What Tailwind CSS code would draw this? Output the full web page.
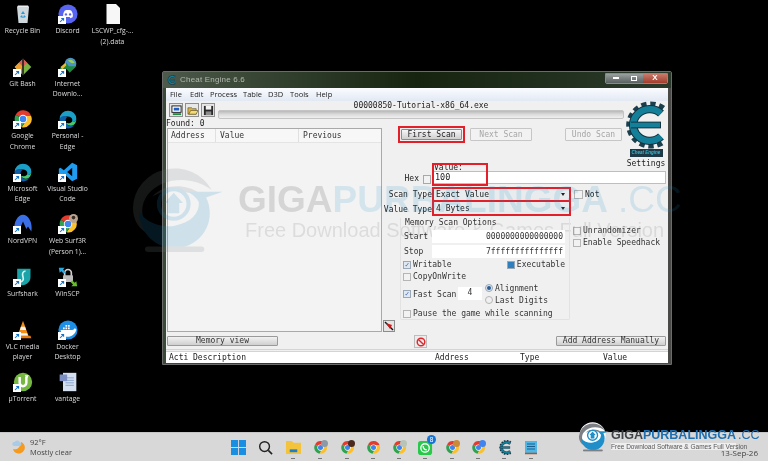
<!DOCTYPE html>
<html lang="en">
<head>
  <meta charset="UTF-8" />
  <title>Cheat Engine desktop</title>
  <script src="https://cdn.jsdelivr.net/npm/@tailwindcss/browser@4"></script>
</head>
<body class="bg-black overflow-hidden">

  <!-- shared icons -->
  <svg class="hidden" xmlns="http://www.w3.org/2000/svg">
    <symbol id="chrome" viewBox="0 0 24 24">
      <path d="M12 12 3.3 7A10 10 0 0 1 21.6 8H12z" fill="#e33b2e"/>
      <path d="M3.3 7A10 10 0 0 0 10.5 21.9L15 13.5 12 12z" fill="#2fa14f"/>
      <path d="M21.6 8A10 10 0 0 1 10.5 21.9L15.5 14 12 8z" fill="#fbc02d"/>
      <circle cx="12" cy="12" r="5" fill="#fff"/>
      <circle cx="12" cy="12" r="4" fill="#3f84f0"/>
    </symbol>
    <symbol id="edge" viewBox="0 0 24 24">
      <path d="M2 12A10 10 0 0 1 22 12C22 15 19 16 16.500 15.500 18 14 17.500 9 12 9 6 9 3 11 2 12z" fill="#1b9fc7"/>
      <path d="M2 12C3 8 9 7.500 11 10 8 12 8.500 18 13 20 15 21 18 20.500 20 19A10 10 0 0 1 2 12z" fill="#0f5fa8"/>
      <path d="M16.500 15.500C18.500 16 21 15.500 22 13 21.500 16 20.500 18 19 19 16 21 11 20 9.500 16.500 12 17.500 15 17 16.500 15.500z" fill="#45c96a"/>
    </symbol>
    <symbol id="short" viewBox="0 0 10 10">
      <rect width="10" height="10" fill="#fff"/>
      <path d="M2.500 7.500 6.500 3.500M4 3h3v3" fill="none" stroke="#1573c9" stroke-width="1.300"/>
    </symbol>
    <symbol id="cegear" viewBox="0 0 48 48">
      <path d="M44 7A21 21 0 1 0 44 41" fill="none" stroke="#1c3f4e" stroke-width="7" stroke-dasharray="5 3.500"/>
      <path d="M42 12A16.500 16.500 0 1 0 42 36" fill="none" stroke="#14323f" stroke-width="8.500"/>
      <path d="M42 12A16.500 16.500 0 1 0 42 36" fill="none" stroke="#137f98" stroke-width="6.500"/>
      <path d="M12 24H42" fill="none" stroke="#14323f" stroke-width="7"/>
      <path d="M11 24H41" fill="none" stroke="#137f98" stroke-width="5"/>
    </symbol>
    <symbol id="gplogo" viewBox="0 0 100 95">
      <path d="M3 46A45 43 0 0 1 88 27C68 12 36 12 19 32 8 46 13 66 27 76 12 74 3 62 3 46z" fill="#7c8085"/>
      <path d="M24 34C36 20 60 20 74 30L62 30C50 25 36 27 24 34z" fill="#7c8085"/>
      <path d="M62 29H100L82 35A38 38 0 1 1 10 50A33 24 0 0 0 74 40 28 28 0 0 0 62 29z" fill="#1f8ec9"/>
      <circle cx="47" cy="42" r="16" fill="none" stroke="#1f8ec9" stroke-width="4.500"/>
      <path d="M47 30 37 41H41V52H53V41H57z" fill="#1f8ec9"/>
      <rect x="16" y="88" width="64" height="6" rx="3" fill="#7c8085"/>
    </symbol>
  </svg>

  <div class="relative w-[768px] h-[461px] overflow-hidden bg-black blur-[0.35px]">

    <!-- desktop icons -->
    <div class="absolute left-0 top-0 grid grid-flow-col grid-rows-[repeat(8,52.6px)] grid-cols-[45px_45px_45px] text-[6.8px] leading-[10.6px] text-[#dcdcdc] text-center font-['Open_Sans',sans-serif]">
      <div class="flex flex-col items-center pt-[4px]">
        <svg class="w-[20px] h-[20px]" viewBox="0 0 20 20"><path d="M4 3h12l-1.500 16h-9z" fill="#cfd8dc"/><path d="M5 1.500h10L16 3H4z" fill="#eceff1"/><path d="M10 7l2 3h-4zM7 13l2-2 1 3zM13 13l-2-2-1 3z" fill="#2a9bd8"/></svg>
        <span class="mt-[2px]">Recycle Bin</span>
      </div>
      <div class="flex flex-col items-center pt-[4px]">
        <div class="relative w-[20px] h-[20px]">
          <svg class="w-[20px] h-[20px]" viewBox="0 0 24 24"><path d="M12 2 2 12l10 10 10-10z" fill="#7cb342"/><path d="M12 2 7 7l5 5 5-5z" fill="#e05a5a"/><path d="M2 12l5-5 5 5-5 5z" fill="#f0a030"/><path d="M12 2v20" stroke="#222" stroke-width="2"/></svg>
          <svg class="absolute left-0 bottom-0 w-[8px] h-[8px]"><use href="#short"/></svg>
        </div>
        <span class="mt-[2px]">Git Bash</span>
      </div>
      <div class="flex flex-col items-center pt-[4px]">
        <div class="relative w-[20px] h-[20px]">
          <svg class="w-[20px] h-[20px]"><use href="#chrome"/></svg>
          <svg class="absolute left-0 bottom-0 w-[8px] h-[8px]"><use href="#short"/></svg>
        </div>
        <span class="mt-[2px]">Google<br>Chrome</span>
      </div>
      <div class="flex flex-col items-center pt-[4px]">
        <div class="relative w-[20px] h-[20px]">
          <svg class="w-[20px] h-[20px]"><use href="#edge"/></svg>
          <svg class="absolute left-0 bottom-0 w-[8px] h-[8px]"><use href="#short"/></svg>
        </div>
        <span class="mt-[2px]">Microsoft<br>Edge</span>
      </div>
      <div class="flex flex-col items-center pt-[4px]">
        <div class="relative w-[20px] h-[20px]">
          <svg class="w-[20px] h-[20px]" viewBox="0 0 24 24"><path d="M2 21C0 10 6 1 12 1s12 9 10 20l-4-6-2 3-4-9-4 9-2-3z" fill="#3b6fe8"/></svg>
          <svg class="absolute left-0 bottom-0 w-[8px] h-[8px]"><use href="#short"/></svg>
        </div>
        <span class="mt-[2px]">NordVPN</span>
      </div>
      <div class="flex flex-col items-center pt-[4px]">
        <div class="relative w-[20px] h-[20px]">
          <svg class="w-[20px] h-[20px]" viewBox="0 0 24 24"><path d="M5 2h16v10c0 6-5 10-11 10H5z" fill="#1aa3a8"/><path d="M15 5c-4 0-4 4-3 7s0 6-4 6" fill="none" stroke="#d5f5f3" stroke-width="2"/></svg>
          <svg class="absolute left-0 bottom-0 w-[8px] h-[8px]"><use href="#short"/></svg>
        </div>
        <span class="mt-[2px]">Surfshark</span>
      </div>
      <div class="flex flex-col items-center pt-[4px]">
        <div class="relative w-[20px] h-[20px]">
          <svg class="w-[20px] h-[20px]" viewBox="0 0 24 24"><path d="M12 1 5 20h14z" fill="#f28c13"/><path d="M9.500 8h5l1.200 4H8.300zM7 16h10l1 3H6z" fill="#f4f4f4"/><path d="M3 19h18l1 3H2z" fill="#e57a0c"/></svg>
          <svg class="absolute left-0 bottom-0 w-[8px] h-[8px]"><use href="#short"/></svg>
        </div>
        <span class="mt-[2px]">VLC media<br>player</span>
      </div>
      <div class="flex flex-col items-center pt-[4px]">
        <div class="relative w-[20px] h-[20px]">
          <svg class="w-[20px] h-[20px]" viewBox="0 0 24 24"><circle cx="12" cy="12" r="11" fill="#76b642"/><path d="M8 6v7a4 4 0 0 0 8 0V6" fill="none" stroke="#fff" stroke-width="3"/><path d="M14 4h5l-2.500 4z" fill="#fff"/></svg>
          <svg class="absolute left-0 bottom-0 w-[8px] h-[8px]"><use href="#short"/></svg>
        </div>
        <span class="mt-[2px]">µTorrent</span>
      </div>

      <div class="flex flex-col items-center pt-[4px]">
        <div class="relative w-[20px] h-[20px]">
          <svg class="w-[20px] h-[20px]" viewBox="0 0 24 24"><circle cx="12" cy="12" r="11.500" fill="#5865f2"/><path d="M6.500 16c-1-3 0-6 1.500-8 1.500-.7 2.500-.8 3-.8h2c.5 0 1.500.1 3 .8 1.500 2 2.500 5 1.500 8-1 .6-2 1-2.500 1l-1-1.500h-5L8.500 17c-.5 0-1-.4-2-1z" fill="#fff"/><circle cx="9.500" cy="12.500" r="1.400" fill="#5865f2"/><circle cx="14.500" cy="12.500" r="1.400" fill="#5865f2"/></svg>
          <svg class="absolute left-0 bottom-0 w-[8px] h-[8px]"><use href="#short"/></svg>
        </div>
        <span class="mt-[2px]">Discord</span>
      </div>
      <div class="flex flex-col items-center pt-[4px]">
        <div class="relative w-[20px] h-[20px]">
          <svg class="w-[20px] h-[20px]" viewBox="0 0 24 24"><circle cx="15" cy="8" r="7" fill="#4d93c9"/><path d="M12 4c3-2 7 0 8 3-3 1-6 0-8-3z" fill="#9ad34a"/><path d="M2 14 10 7l3 4 9 0-8 8-4-5-5 5z" fill="#1e8a3f"/><path d="M3 12l6-5 1 3-5 5z" fill="#e7b93c"/></svg>
          <svg class="absolute left-0 bottom-0 w-[8px] h-[8px]"><use href="#short"/></svg>
        </div>
        <span class="mt-[2px]">Internet<br>Downlo...</span>
      </div>
      <div class="flex flex-col items-center pt-[4px]">
        <div class="relative w-[20px] h-[20px]">
          <svg class="w-[20px] h-[20px]"><use href="#edge"/></svg>
          <svg class="absolute left-0 bottom-0 w-[8px] h-[8px]"><use href="#short"/></svg>
        </div>
        <span class="mt-[2px]">Personal -<br>Edge</span>
      </div>
      <div class="flex flex-col items-center pt-[4px]">
        <div class="relative w-[20px] h-[20px]">
          <svg class="w-[20px] h-[20px]" viewBox="0 0 24 24"><path d="M17 1l6 3v16l-6 3-10-9-4 3-2-1V8l2-1 4 3z" fill="#1f9cf0"/><path d="M17 7l-6 5 6 5z" fill="#000"/></svg>
          <svg class="absolute left-0 bottom-0 w-[8px] h-[8px]"><use href="#short"/></svg>
        </div>
        <span class="mt-[2px] whitespace-nowrap">Visual Studio<br>Code</span>
      </div>
      <div class="flex flex-col items-center pt-[4px]">
        <div class="relative w-[20px] h-[20px]">
          <svg class="w-[20px] h-[20px]"><use href="#chrome"/></svg>
          <svg class="absolute right-0 top-0 w-[9px] h-[9px]" viewBox="0 0 10 10"><circle cx="5" cy="5" r="5" fill="#b9a58f"/><circle cx="5" cy="4" r="2" fill="#3a2c22"/></svg>
          <svg class="absolute left-0 bottom-0 w-[8px] h-[8px]"><use href="#short"/></svg>
        </div>
        <span class="mt-[2px] whitespace-nowrap">Web Surf3R<br>(Person 1)...</span>
      </div>
      <div class="flex flex-col items-center pt-[4px]">
        <div class="relative w-[20px] h-[20px]">
          <svg class="w-[20px] h-[20px]" viewBox="0 0 24 24"><path d="M8 11V7a4 4 0 0 1 8 0v4" fill="none" stroke="#cfcfcf" stroke-width="2"/><rect x="6" y="10" width="12" height="8" rx="1" fill="#bdbdbd"/><path d="M1 1h7L6 3l3 3-2 2-3-3-2 2z" fill="#29a8e0"/><path d="M23 23h-7l2-2-3-3 2-2 3 3 2-2z" fill="#5fc21e"/></svg>
          <svg class="absolute left-0 bottom-0 w-[8px] h-[8px]"><use href="#short"/></svg>
        </div>
        <span class="mt-[2px]">WinSCP</span>
      </div>
      <div class="flex flex-col items-center pt-[4px]">
        <div class="relative w-[20px] h-[20px]">
          <svg class="w-[20px] h-[20px]" viewBox="0 0 24 24"><circle cx="12" cy="12" r="11.500" fill="#1d8fe6"/><path d="M3 12h14c1.500 0 2.500-1 3-2 1 .5 2 1 2 2-2 6-7 9-12 8-4-1-6-4-7-8z" fill="#fff"/><path d="M6 9h2v2H6zM9 9h2v2H9zM12 9h2v2h-2zM9 6h2v2H9zM12 6h2v2h-2z" fill="#fff"/></svg>
          <svg class="absolute left-0 bottom-0 w-[8px] h-[8px]"><use href="#short"/></svg>
        </div>
        <span class="mt-[2px]">Docker<br>Desktop</span>
      </div>
      <div class="flex flex-col items-center pt-[4px]">
        <svg class="w-[20px] h-[20px]" viewBox="0 0 24 24"><path d="M6 1h16v22H6z" fill="#d4e0f2"/><path d="M9 7h10M9 10h10M9 13h10M9 16h10" stroke="#7d99c9"/><rect x="2" y="3" width="9" height="8" fill="#7c8fc0"/></svg>
        <span class="mt-[2px]">vantage</span>
      </div>

      <div class="flex flex-col items-center pt-[4px]">
        <svg class="w-[20px] h-[20px]" viewBox="0 0 20 20"><path d="M3.500 0H13l4 4v16H3.500z" fill="#f7f7f7"/></svg>
        <span class="mt-[2px] whitespace-nowrap">LSCWP_cfg-...<br>(2).data</span>
      </div>
    </div>

    <!-- cheat engine window -->
    <div class="absolute left-[162px] top-[71px] w-[510px] h-[294px] flex flex-col bg-gradient-to-r from-[#3a4a38] via-[#1b2a1a] to-[#4a4a48] border border-[#6b6b6b] rounded-t-[2px] px-[3px] pb-[1px]">

      <div class="h-[16px] shrink-0 flex items-center justify-between bg-gradient-to-r from-[#4d5a4c] via-[#16240f] to-[#2b3a2b] -mx-[3px] pl-[3px] pr-[3px]">
        <div class="flex items-center gap-[4px]">
          <svg class="w-[10px] h-[10px]"><use href="#cegear"/></svg>
          <span class="text-[8px] text-[#b5b8b0] tracking-[0.2px] font-['Liberation_Sans',sans-serif]">Cheat Engine 6.6</span>
        </div>
        <div class="flex h-[11px] -mt-[4px] border border-[#8a8a8a] rounded-b-[2px] overflow-hidden">
          <div class="w-[19px] flex items-center justify-center bg-gradient-to-b from-[#9aa0a0] to-[#5a6060]"><div class="w-[6px] h-[2px] bg-white"></div></div>
          <div class="w-[18px] flex items-center justify-center bg-gradient-to-b from-[#9aa0a0] to-[#5a6060]"><div class="w-[6px] h-[5px] border border-white"></div></div>
          <div class="w-[24px] flex items-center justify-center bg-gradient-to-b from-[#c77a6c] to-[#a33a2a] text-[8px] leading-none font-bold text-white font-['Liberation_Sans',sans-serif]">X</div>
        </div>
      </div>

      <div class="relative flex-1 flex flex-col bg-[#f0f0f0] overflow-hidden font-['DejaVu_Sans_Mono',monospace] text-[8px] leading-[9px] text-[#333]">

        <!-- menu -->
        <div class="h-[13px] shrink-0 flex items-center bg-gradient-to-b from-[#fafcff] to-[#e2e9f3] text-[7.5px] text-[#222] font-['Open_Sans',sans-serif]">
          <span class="ml-[4px] w-[20px]">File</span>
          <span class="w-[20px]">Edit</span>
          <span class="w-[33px]">Process</span>
          <span class="w-[25px]">Table</span>
          <span class="w-[22px]">D3D</span>
          <span class="w-[26px]">Tools</span>
          <span>Help</span>
        </div>

        <!-- toolbar -->
        <div class="h-[18px] shrink-0 flex pl-[3px] pr-[44px]">
          <div class="flex gap-[2px] pt-[2px]">
            <div class="w-[14px] h-[14px] border border-[#8f8f8f] bg-[#e8e8e8] flex items-center justify-center">
              <svg class="w-[11px] h-[11px]" viewBox="0 0 12 12"><rect x="1" y="1" width="10" height="7" fill="#fff" stroke="#111"/><rect x="3" y="3" width="6" height="3" fill="#1f5fc4"/><path d="M2 9h9v2H2z" fill="#1e8a3f"/></svg>
            </div>
            <div class="w-[14px] h-[14px] border border-[#8f8f8f] bg-[#e8e8e8] flex items-center justify-center">
              <svg class="w-[11px] h-[11px]" viewBox="0 0 12 12"><path d="M1 3h4l1 1h4v6H1z" fill="#d8b24a" stroke="#4a3c12" stroke-width=".6"/><path d="M2 10l2-4h8l-2 4z" fill="#f3db7a" stroke="#4a3c12" stroke-width=".6"/></svg>
            </div>
            <div class="w-[14px] h-[14px] border border-[#8f8f8f] bg-[#e8e8e8] flex items-center justify-center">
              <svg class="w-[11px] h-[11px]" viewBox="0 0 12 12"><path d="M1 1h10v10H1z" fill="#2a2a2a"/><rect x="3" y="1" width="6" height="4" fill="#f4f4f4"/><rect x="3" y="7" width="6" height="4" fill="#8c8c8c"/></svg>
            </div>
          </div>
          <div class="flex-1 flex flex-col ml-[3px]">
            <div class="h-[8px] text-center text-[#222] whitespace-nowrap">00000850-Tutorial-x86_64.exe</div>
            <div class="h-[9px] mt-[1px] border border-[#c4c4c4] rounded-[2px] bg-gradient-to-b from-[#b9b9b9] via-[#dcdcdc] to-[#efefef]"></div>
          </div>
        </div>

        <!-- logo over the right column -->
        <div class="absolute right-0 top-[12px] w-[44px] flex flex-col items-center">
          <svg class="w-[42px] h-[50px]" viewBox="6 0 42 52" preserveAspectRatio="none"><use href="#cegear" width="48" height="52"/></svg>
          <div class="w-[33px] h-[8px] -mt-[1px] bg-[#1d3946] text-[4.5px] leading-[8px] text-center text-[#37b6d0] italic font-bold whitespace-nowrap overflow-hidden font-['Liberation_Sans',sans-serif]">Cheat Engine</div>
          <span class="mt-[2px] text-[#222]">Settings</span>
        </div>

        <!-- main area -->
        <div class="h-[213px] shrink-0 flex">
          <div class="w-[216px] shrink-0 flex flex-col">
            <div class="h-[9px] text-[#222]">Found: 0</div>
            <div class="ml-px h-[204px] border border-[#a9a9a9] bg-[#f3f3f3]">
              <div class="h-[14px] flex items-center border-b border-[#e4e4e4] bg-[#f7f7f7]">
                <span class="w-[48px] pl-[3px] h-full flex items-center border-r border-[#e0e0e0]">Address</span>
                <span class="w-[83px] pl-[4px] h-full flex items-center border-r border-[#e0e0e0]">Value</span>
                <span class="pl-[4px]">Previous</span>
              </div>
            </div>
          </div>

          <div class="flex-1 flex flex-col pt-[7px]">
            <!-- scan buttons -->
            <div class="h-[17px] flex items-center">
              <div class="ml-[16px] w-[67px] h-[17px] border-2 border-[#e3202a] p-px">
                <button class="w-full h-full border border-[#8c8c8c] rounded-[1px] bg-gradient-to-b from-[#f6f6f6] to-[#cfcfcf] text-[#222]">First Scan</button>
              </div>
              <button class="ml-[5px] w-[62px] h-[13px] border border-[#c6c6c6] rounded-[1px] bg-[#f2f2f2] text-[#a6a6a6]">Next Scan</button>
              <button class="ml-[33px] w-[57px] h-[13px] border border-[#c6c6c6] rounded-[1px] bg-[#f2f2f2] text-[#a6a6a6]">Undo Scan</button>
            </div>

            <!-- value -->
            <div class="mt-[20px] h-[23px] flex">
              <div class="w-[50px] flex items-end justify-end pb-[2px]">
                <span class="mr-[4px] mb-px text-[#222]">Hex</span>
                <div class="w-[8px] h-[9px] border border-[#a8a8a8] bg-[#f2f2f2] mr-px"></div>
              </div>
              <div class="relative w-[234px] z-20">
                <div class="h-[8px] pl-[2px] leading-[10px] text-[#222]">Value:</div>
                <div class="ml-px h-[13px] border border-[#a9c3d8] bg-white pl-[1px] leading-[10px] text-[8.5px] text-[#222]">100</div>
                <div class="absolute left-0 top-0 w-[56px] h-[23px] border-2 border-[#e3202a]"></div>
              </div>
            </div>

            <!-- scan type / value type -->
            <div class="mt-[1px] h-[15px] flex items-center">
              <span class="w-[50px] text-right whitespace-nowrap text-[#222]">Scan Type</span>
              <div class="w-[139px] h-[15px] border-2 border-[#e3202a] flex items-center justify-between bg-[#e8ecee] pl-[2px] pr-[4px] text-[#222]">
                <span>Exact Value</span><span class="border-x-[2.5px] border-t-[3px] border-x-transparent border-t-[#222]"></span>
              </div>
              <div class="ml-[3px] w-[9px] h-[9px] border border-[#b5b5b5] bg-[#f2f2f2]"></div>
              <span class="ml-[2px] text-[#222]">Not</span>
            </div>
            <div class="h-[14px] flex items-center">
              <span class="w-[50px] text-right whitespace-nowrap text-[#222]">Value Type</span>
              <div class="w-[139px] h-[14px] border-2 border-t-0 border-[#e3202a] flex items-center justify-between bg-[#e8ecee] pl-[2px] pr-[4px] text-[#222]">
                <span>4 Bytes</span><span class="border-x-[2.5px] border-t-[3px] border-x-transparent border-t-[#222]"></span>
              </div>
            </div>

            <!-- memory scan options -->
            <div class="flex mt-[2px]">
              <div class="ml-[18px] w-[170px] h-[102px] border-x border-b border-[#e2e2e2] rounded-b-[2px] flex flex-col relative z-20">
                <div class="h-[8px] pl-[4px] text-[#333]">Memory Scan Options</div>
                <div class="mt-[4px] h-[13px] flex items-center">
                  <span class="w-[31px] pl-[3px]">Start</span>
                  <div class="w-[133px] h-[13px] bg-white text-right pr-[2px] leading-[13px]">0000000000000000</div>
                </div>
                <div class="mt-[2px] h-[13px] flex items-center">
                  <span class="w-[31px] pl-[3px]">Stop</span>
                  <div class="w-[133px] h-[13px] bg-white text-right pr-[2px] leading-[13px]">7fffffffffffffff</div>
                </div>
                <div class="mt-[2px] h-[9px] flex items-center justify-between pl-[2px] pr-[4px]">
                  <div class="flex items-center">
                    <div class="w-[8px] h-[8px] border border-[#9aa7b5] bg-[#dfe7f2] text-[7px] leading-[6px] text-[#2d5da8] text-center font-bold">✓</div>
                    <span class="ml-[2px]">Writable</span>
                  </div>
                  <div class="flex items-center">
                    <div class="w-[8px] h-[8px] border border-[#9aa7b5] bg-[#2f7fbe]"></div>
                    <span class="ml-[2px]">Executable</span>
                  </div>
                </div>
                <div class="mt-[3px] h-[9px] flex items-center pl-[2px]">
                  <div class="w-[8px] h-[8px] border border-[#b5b5b5] bg-[#f2f2f2]"></div>
                  <span class="ml-[2px]">CopyOnWrite</span>
                </div>
                <div class="mt-[2px] h-[22px] flex items-center pl-[2px]">
                  <div class="w-[8px] h-[8px] border border-[#9aa7b5] bg-[#dfe7f2] text-[7px] leading-[6px] text-[#2d5da8] text-center font-bold">✓</div>
                  <span class="ml-[2px] w-[45px] whitespace-nowrap">Fast Scan</span>
                  <div class="w-[24px] h-[13px] bg-white text-center leading-[12px] -mt-px">4</div>
                  <div class="ml-[3px] flex flex-col gap-[3px]">
                    <div class="flex items-center">
                      <div class="w-[8px] h-[8px] rounded-full border border-[#9aa7b5] bg-[#dfe7f2] flex items-center justify-center"><div class="w-[4px] h-[4px] rounded-full bg-[#2a5f96]"></div></div>
                      <span class="ml-[2px]">Alignment</span>
                    </div>
                    <div class="flex items-center">
                      <div class="w-[8px] h-[8px] rounded-full border border-[#b5b5b5] bg-[#f0f0f0]"></div>
                      <span class="ml-[2px]">Last Digits</span>
                    </div>
                  </div>
                </div>
                <div class="mt-[4px] h-[9px] flex items-center pl-[2px]">
                  <div class="w-[8px] h-[8px] border border-[#b5b5b5] bg-[#f2f2f2]"></div>
                  <span class="ml-[2px] whitespace-nowrap">Pause the game while scanning</span>
                </div>
              </div>
              <div class="ml-[3px] flex flex-col gap-[3px] pt-[8px]">
                <div class="flex items-center">
                  <div class="w-[8px] h-[8px] border border-[#b5b5b5] bg-[#f2f2f2]"></div>
                  <span class="ml-[2px]">Unrandomizer</span>
                </div>
                <div class="flex items-center">
                  <div class="w-[8px] h-[8px] border border-[#b5b5b5] bg-[#f2f2f2]"></div>
                  <span class="ml-[2px] whitespace-nowrap">Enable Speedhack</span>
                </div>
              </div>
            </div>

            <button class="ml-[1px] w-[12px] h-[12px] border border-[#8c8c8c] bg-[#e4e4e4] flex items-center justify-center">
              <svg class="w-[10px] h-[10px]" viewBox="0 0 10 10"><path d="M1 1l8 8" stroke="#111" stroke-width="1.500"/><path d="M2 2l6 2-2 4z" fill="#d01818"/></svg>
            </button>
          </div>
        </div>

        <!-- bottom buttons -->
        <div class="h-[17px] shrink-0 flex items-start pt-[4px]">
          <button class="ml-[1px] w-[111px] h-[10px] leading-[8px] border border-[#9a9a9a] rounded-[1px] bg-gradient-to-b from-[#f2f2f2] to-[#cfcfcf]">Memory view</button>
          <button class="ml-[136px] w-[13px] h-[13px] -mt-px border border-[#bdbdbd] bg-[#ececec] flex items-center justify-center">
            <svg class="w-[10px] h-[10px]" viewBox="0 0 10 10"><circle cx="5" cy="5" r="3.800" fill="none" stroke="#e0262c" stroke-width="1.400"/><path d="M2.400 2.400 7.600 7.600" stroke="#e0262c" stroke-width="1.400"/></svg>
          </button>
          <button class="ml-[129px] w-[110px] h-[10px] leading-[8px] border border-[#9a9a9a] rounded-[1px] bg-gradient-to-b from-[#f2f2f2] to-[#cfcfcf]">Add Address Manually</button>
        </div>

        <div class="h-[3px] shrink-0 border-y border-[#d4d4d4]"></div>

        <!-- address list header -->
        <div class="flex-1 flex items-center bg-white text-[#222]">
          <span class="ml-[3px] w-[24px]">Acti</span>
          <span class="w-[242px]">Description</span>
          <span class="w-[85px]">Address</span>
          <span class="w-[83px]">Type</span>
          <span>Value</span>
        </div>
      </div>
    </div>

    <!-- big watermark -->
    <div class="absolute left-[130px] top-[165px] w-[540px] h-[92px] flex pointer-events-none z-10 font-['Liberation_Sans',sans-serif]">
      <svg class="w-[93px] h-[88px] shrink-0 opacity-[0.17]"><use href="#gplogo"/></svg>
      <div class="ml-[15px] flex flex-col pt-[16px] opacity-[0.14]">
        <div class="text-[37px] leading-[38px] font-bold whitespace-nowrap">
          <span class="text-[#2a2a2a]">GIGA</span><span class="text-[#1f8ec9]">PURBALINGGA</span><span class="ml-[10px] text-[#1f8ec9] font-normal">.CC</span>
        </div>
        <div class="ml-[7px] text-[20px] leading-[22px] text-[#555] whitespace-nowrap">Free Download Software &amp; Games Full Version</div>
      </div>
    </div>

    <!-- taskbar -->
    <div class="absolute left-0 right-0 bottom-0 h-[29px] flex items-center bg-[#d8d8d8] border-t border-[#c6c6c6]">
      <svg class="ml-[11px] w-[16px] h-[16px]" viewBox="0 0 16 16"><path d="M10 3a6 6 0 1 1-8 7c3 1 7 0 8-7z" fill="#f39a1f"/><path d="M3 7h6a1.800 1.800 0 0 0 0-3.500 3 3 0 0 0-5.500-.5A2 2 0 0 0 3 7z" fill="#a9cbe8"/></svg>
      <div class="ml-[3px] w-[196px] flex flex-col text-[7.500px] leading-[10px] text-[#444] font-['Open_Sans',sans-serif]">
        <span>92°F</span>
        <span>Mostly clear</span>
      </div>

      <svg class="w-[15px] h-[15px] ml-[5px]" viewBox="0 0 16 16"><path d="M0 0h7.500v7.500H0zM8.500 0H16v7.500H8.500zM0 8.500h7.500V16H0zM8.500 8.500H16V16H8.500z" fill="#1a8ee0"/></svg>
      <svg class="w-[15px] h-[15px] ml-[12px]" viewBox="0 0 16 16"><circle cx="7" cy="7" r="5.200" fill="none" stroke="#222" stroke-width="1.500"/><path d="M11 11l4 4" stroke="#222" stroke-width="1.700"/></svg>

      <div class="relative ml-[13px] w-[15px] h-[15px]">
        <svg class="w-[15px] h-[15px]" viewBox="0 0 16 16"><path d="M0 1h6l2 2h8v12H0z" fill="#f3c33c"/><path d="M4 10h8v3H4z" fill="#1a7fd0"/></svg>
        <div class="absolute left-[5px] -bottom-[4px] w-[4px] h-px bg-[#777]"></div>
      </div>
      <div class="relative ml-[12px] w-[15px] h-[15px]">
        <svg class="w-[15px] h-[15px]"><use href="#chrome"/></svg>
        <div class="absolute right-0 top-0 w-[7px] h-[7px] rounded-full bg-[#8c9aa8]"></div>
        <div class="absolute left-[5px] -bottom-[4px] w-[4px] h-px bg-[#777]"></div>
      </div>
      <div class="relative ml-[12px] w-[15px] h-[15px]">
        <svg class="w-[15px] h-[15px]"><use href="#chrome"/></svg>
        <div class="absolute right-0 top-0 w-[7px] h-[7px] rounded-full bg-[#4a2a20]"></div>
        <div class="absolute left-[5px] -bottom-[4px] w-[4px] h-px bg-[#777]"></div>
      </div>
      <div class="relative ml-[11px] w-[15px] h-[15px]">
        <svg class="w-[15px] h-[15px]"><use href="#chrome"/></svg>
        <div class="absolute left-[5px] -bottom-[4px] w-[4px] h-px bg-[#777]"></div>
      </div>
      <div class="relative ml-[11px] w-[15px] h-[15px]">
        <svg class="w-[15px] h-[15px]"><use href="#chrome"/></svg>
        <div class="absolute right-0 top-0 w-[7px] h-[7px] rounded-full bg-[#b8c4b8]"></div>
        <div class="absolute left-[5px] -bottom-[4px] w-[4px] h-px bg-[#777]"></div>
      </div>
      <div class="relative ml-[11px] w-[15px] h-[15px]">
        <svg class="w-[15px] h-[15px]" viewBox="0 0 16 16"><rect width="15" height="15" y="1" rx="3" fill="#28c94a"/><circle cx="7.500" cy="8.500" r="4.500" fill="none" stroke="#fff" stroke-width="1.400"/><path d="M5.500 6.500c0 2.500 1.500 4 4 4" fill="none" stroke="#fff" stroke-width="1.400"/></svg>
        <div class="absolute -right-[3px] -top-[5px] w-[9px] h-[9px] rounded-full bg-[#1673d6] text-[6.500px] leading-[9px] text-white text-center font-['Liberation_Sans',sans-serif]">8</div>
        <div class="absolute left-[5px] -bottom-[4px] w-[4px] h-px bg-[#777]"></div>
      </div>
      <div class="relative ml-[12px] w-[15px] h-[15px]">
        <svg class="w-[15px] h-[15px]"><use href="#chrome"/></svg>
        <div class="absolute right-0 top-0 w-[7px] h-[7px] rounded-full bg-[#c98a3a]"></div>
        <div class="absolute left-[5px] -bottom-[4px] w-[4px] h-px bg-[#777]"></div>
      </div>
      <div class="relative ml-[11px] w-[15px] h-[15px]">
        <svg class="w-[15px] h-[15px]"><use href="#chrome"/></svg>
        <div class="absolute right-0 top-0 w-[7px] h-[7px] rounded-full bg-[#3f84f0]"></div>
        <div class="absolute left-[5px] -bottom-[4px] w-[4px] h-px bg-[#777]"></div>
      </div>
      <div class="relative ml-[11px] w-[15px] h-[15px]">
        <svg class="w-[15px] h-[15px]"><use href="#cegear"/></svg>
        <div class="absolute left-[5px] -bottom-[4px] w-[4px] h-px bg-[#777]"></div>
      </div>
      <div class="relative ml-[13px] w-[12px] h-[15px]">
        <svg class="w-[12px] h-[15px]" viewBox="0 0 12 15"><rect y="1" width="12" height="12" fill="#4fb6e6"/><path d="M2 4h8M2 6.500h8M2 9h8" stroke="#1a5f8a"/><path d="M0 13.500h12" stroke="#b5531c" stroke-width="1.500"/></svg>
        <div class="absolute left-[4px] -bottom-[4px] w-[4px] h-px bg-[#777]"></div>
      </div>

      <div class="ml-auto mr-[10px] self-end mb-[3px] text-[8px] leading-[10px] text-[#444] font-['Open_Sans',sans-serif]">13-Sep-26</div>
    </div>

    <!-- corner watermark logo -->
    <div class="absolute left-[578px] top-[421px] flex z-10 font-['Liberation_Sans',sans-serif]">
      <svg class="w-[31px] h-[32px] shrink-0" viewBox="0 0 100 95"><circle cx="47" cy="42" r="42" fill="#fff"/><use href="#gplogo" width="100" height="95"/></svg>
      <div class="ml-[2px] flex flex-col pt-[8px]">
        <div class="text-[12.500px] leading-[13px] font-bold whitespace-nowrap">
          <span class="text-[#3f4348]">GIGA</span><span class="text-[#1f6fb0]">PURBALINGGA</span><span class="ml-[2px] text-[#1f6fb0] font-normal">.CC</span>
        </div>
        <div class="mt-px w-[125px] h-[7px] bg-white/60 text-[6.500px] leading-[7px] text-[#555] whitespace-nowrap">Free Download Software &amp; Games Full Version</div>
      </div>
    </div>
  </div>

</body>
</html>
